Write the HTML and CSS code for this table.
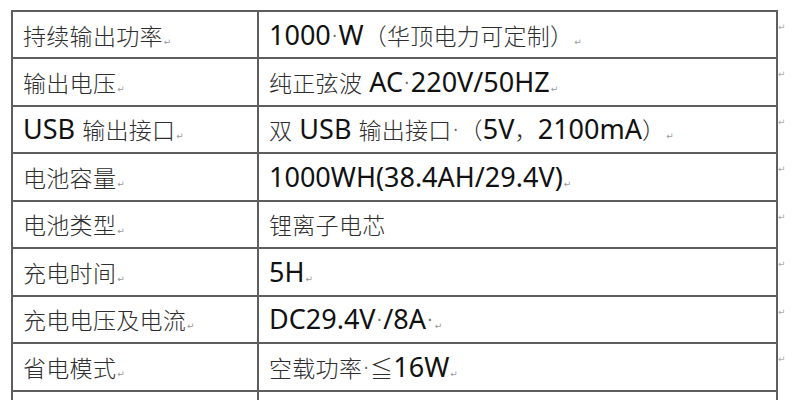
FILE: index.html
```html
<!DOCTYPE html>
<html lang="zh">
<head>
<meta charset="utf-8">
<link rel="stylesheet" href="styles.css">
</head>
<body>
<div class="sheet">
  <div class="cell key"><span class="zh">持续输出功率</span><span class="pm">↵</span></div>
  <div class="cell val"><span class="en">1000</span><span class="sp">·</span><span class="en">W</span><span class="zh">（华顶电力可定制）</span><span class="pm">↵</span></div>
  <div class="end">↵</div>

  <div class="cell key"><span class="zh">输出电压</span><span class="pm">↵</span></div>
  <div class="cell val"><span class="zh">纯正弦波</span><span class="en"> AC</span><span class="sp">·</span><span class="en">220V/50HZ</span><span class="pm">↵</span></div>
  <div class="end">↵</div>

  <div class="cell key"><span class="en">USB </span><span class="zh">输出接口</span><span class="pm">↵</span></div>
  <div class="cell val"><span class="zh">双</span><span class="en"> USB </span><span class="zh">输出接口</span><span class="sp">·</span><span class="zh">（</span><span class="en">5V</span><span class="zh">，</span><span class="en">2100mA</span><span class="zh">）</span><span class="pm">↵</span></div>
  <div class="end">↵</div>

  <div class="cell key"><span class="zh">电池容量</span><span class="pm">↵</span></div>
  <div class="cell val"><span class="en">1000WH(38.4AH/29.4V)</span><span class="pm">↵</span></div>
  <div class="end">↵</div>

  <div class="cell key"><span class="zh">电池类型</span><span class="pm">↵</span></div>
  <div class="cell val"><span class="zh">锂离子电芯</span></div>
  <div class="end">↵</div>

  <div class="cell key"><span class="zh">充电时间</span><span class="pm">↵</span></div>
  <div class="cell val"><span class="en">5H</span><span class="pm">↵</span></div>
  <div class="end">↵</div>

  <div class="cell key"><span class="zh">充电电压及电流</span><span class="pm">↵</span></div>
  <div class="cell val"><span class="en">DC29.4V</span><span class="sp">·</span><span class="en">/8A</span><span class="sp">·</span><span class="pm">↵</span></div>
  <div class="end">↵</div>

  <div class="cell key"><span class="zh">省电模式</span><span class="pm">↵</span></div>
  <div class="cell val"><span class="zh">空载功率</span><span class="sp">·</span><span class="zh">≦</span><span class="en">16W</span><span class="pm">↵</span></div>
  <div class="end">↵</div>

  <div class="cell key"></div>
  <div class="cell val"></div>
  <div class="end"></div>
</div>
</body>
</html>
```
FILE: styles.css
```css
html, body {
  margin: 0;
  padding: 0;
  background: #ffffff;
  overflow: hidden;
}
body {
  width: 799px;
  height: 400px;
}
.sheet {
  margin: 10px 0 0 11px;
  display: grid;
  grid-template-columns: 248px 519px 16px;
  grid-template-rows: 49px repeat(7, 47.5px) 20px;
}
.cell {
  box-sizing: border-box;
  border-right: 2px solid #5e5e5e;
  border-bottom: 2px solid #5e5e5e;
  display: flex;
  align-items: center;
  padding-left: 10px;
  white-space: nowrap;
  font-family: "Noto Sans CJK SC", sans-serif;
  font-size: 23px;
  line-height: 30px;
  color: #333333;
}
.key {
  border-left: 2px solid #5e5e5e;
}
.sheet > .cell:nth-child(1),
.sheet > .cell:nth-child(2) {
  border-top: 2px solid #5e5e5e;
}
.zh {
  font-family: "Noto Sans CJK SC", sans-serif;
  font-weight: 300;
  font-size: 23px;
  letter-spacing: 0.3px;
  color: #2e2e2e;
}
.en {
  font-family: "Noto Sans", "DejaVu Sans", sans-serif;
  font-size: 27px;
  color: #111111;
  white-space: pre;
}
.sp {
  font-family: "DejaVu Sans", sans-serif;
  font-size: 18px;
  color: #6f6f6f;
  padding: 0 1px;
  position: relative;
  top: 1px;
}
.pm {
  font-family: "DejaVu Sans", sans-serif;
  font-size: 9px;
  color: #999999;
  margin-top: 14px;
  margin-left: 1px;
}
.end {
  font-family: "DejaVu Sans", sans-serif;
  font-size: 9px;
  color: #aaaaaa;
  padding: 10px 0 0 0;
}
.sheet > .end:nth-child(3) {
  padding-top: 12px;
}
```
